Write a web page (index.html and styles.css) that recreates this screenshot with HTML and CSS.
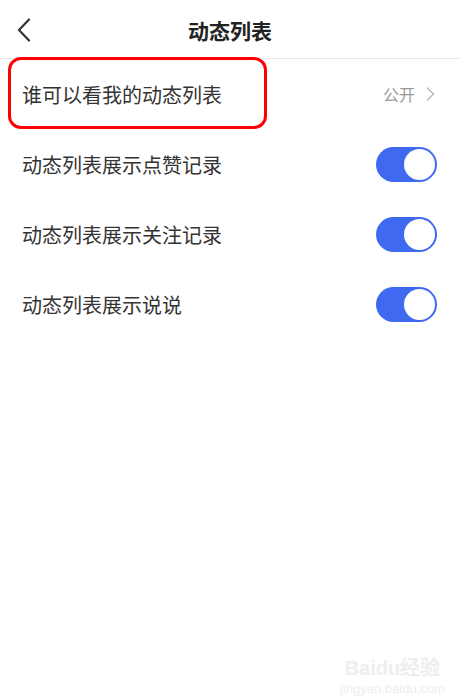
FILE: index.html
```html
<!DOCTYPE html>
<html lang="zh-CN">
<head>
    <meta charset="UTF-8">
    <title>动态列表</title>
    <link rel="stylesheet" href="styles.css">
</head>
<body>
<div id="page">
    <div class="topbar">
        <a class="back">
            <svg width="14" height="24" viewBox="0 0 14 24"><path d="M12 1.5 L2 12 L12 22.5" fill="none" stroke="#333" stroke-width="2.2" stroke-linejoin="round" stroke-linecap="round"/></svg>
        </a>
        <div class="title">动态列表</div>
    </div>
    <ul class="list">
        <li class="row marked">
            <span class="label">谁可以看我的动态列表</span>
            <span class="value">公开
                <svg width="9" height="14" viewBox="0 0 9 14"><path d="M1.5 1 L7.5 7 L1.5 13" fill="none" stroke="#bbb" stroke-width="1.6" stroke-linecap="round" stroke-linejoin="round"/></svg>
            </span>
            <div class="mark"></div>
        </li>
        <li class="row">
            <span class="label">动态列表展示点赞记录</span>
            <span class="switch on"><i></i></span>
        </li>
        <li class="row">
            <span class="label">动态列表展示关注记录</span>
            <span class="switch on"><i></i></span>
        </li>
        <li class="row">
            <span class="label">动态列表展示说说</span>
            <span class="switch on"><i></i></span>
        </li>
    </ul>
    <div class="watermark">
        <div class="wm-logo">Bai<b>du</b>经验</div>
        <div class="wm-url">jingyan.baidu.com</div>
    </div>
</div>
</body>
</html>
```

FILE: styles.css
```css
html,body{
    margin: 0px;
    padding: 0px;
    background: #FFF;
}
ul{
    margin: 0px;
    padding: 0px;
    list-style: none;
}
#page{
    width: 460px;
    height: 700px;
    position: relative;
    font-family: "Noto Sans CJK SC", "Noto Sans", sans-serif;
    color: #333;
}
.topbar{
    height: 58px;
    border-bottom: 1px solid #e8e8e8;
    display: flex;
    align-items: center;
    justify-content: center;
    position: relative;
}
.back{
    position: absolute;
    left: 17px;
    top: 18px;
    display: block;
    height: 24px;
}
.title{
    font-size: 21px;
    font-weight: 700;
    color: #222;
    margin-top: 2px;
}
.row{
    height: 70px;
    padding: 0 22px;
    display: flex;
    align-items: center;
    justify-content: space-between;
    position: relative;
}
.label{
    font-size: 20px;
    color: #333;
}
.value{
    font-size: 16px;
    color: #999;
    display: flex;
    align-items: center;
    gap: 11px;
    margin-right: 3px;
}
.mark{
    position: absolute;
    left: 8px;
    top: -2px;
    width: 253px;
    height: 66px;
    border: 3.5px solid #f00;
    border-radius: 13px;
}
.switch{
    width: 61px;
    height: 35px;
    border-radius: 18px;
    background: #4069f2;
    position: relative;
    margin-right: 1px;
}
.switch i{
    position: absolute;
    right: 2px;
    top: 2px;
    width: 31px;
    height: 31px;
    border-radius: 50%;
    background: #FFF;
}
.watermark{
    position: absolute;
    left: 340px;
    top: 652px;
    color: #eeeeee;
    text-align: center;
}
.wm-logo{
    font-family: "Liberation Sans", sans-serif;
    font-size: 20px;
    font-weight: 700;
}
.wm-url{
    font-family: "Liberation Sans", sans-serif;
    font-size: 13px;
}
```
